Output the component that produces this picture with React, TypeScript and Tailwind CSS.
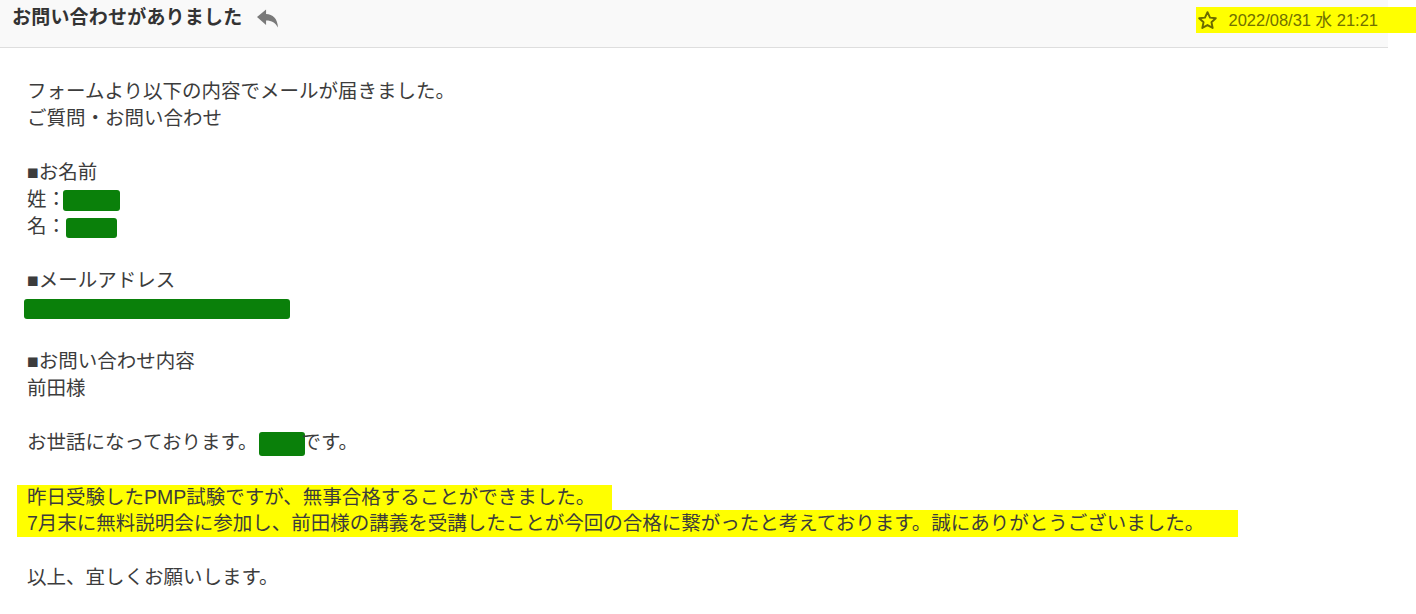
import React from 'react';

const font = { fontFamily: '"Liberation Sans", "Noto Sans CJK JP", sans-serif' };

// green marker blot that hides personal info
const Blot = ({ w, h, className = '' }: { w: string; h: string; className?: string }) => (
  <span className={`inline-block bg-[#0a800a] rounded-[3px] align-middle ${w} ${h} ${className}`} />
);

const Line = ({ children }: { children?: React.ReactNode }) => (
  <div className="h-[27px] leading-[27px] whitespace-nowrap">{children}</div>
);

export default function App() {
  return (
    <div className="w-[1416px] h-[614px] bg-white overflow-hidden" style={font}>
      {/* Header */}
      <div className="w-[1388px] h-[48px] bg-[#f9f9f9] border-b border-[#dedede] flex items-start justify-between pt-[6px]">
        <div className="flex items-center pl-[12px]">
          <span className="text-[19px] leading-[24px] font-bold text-[#333] tracking-[0.2px]">お問い合わせがありました</span>
          <svg viewBox="0 0 24 22" className="ml-[14px] w-[23px] h-[21px]" fill="#7a7a7a">
            <path d="M1 9.5L10.5 1.5V6.3C17.5 6.6 22.6 11 23 20.5C20.5 15.5 16.5 13 10.5 13V17.8Z" />
          </svg>
        </div>
        <div className="flex items-center bg-[#ffff00] h-[26px] mt-[1px] pl-[1px] pr-[38px] -mr-[28px]">
          <svg viewBox="0 0 24 24" className="w-[21px] h-[21px]" fill="none" stroke="#6b6b00" strokeWidth="2.2" strokeLinejoin="round">
            <path d="M12 2.5l2.9 6.2 6.6.7-5 4.5 1.4 6.6L12 17.2l-5.9 3.3 1.4-6.6-5-4.5 6.6-.7z" />
          </svg>
          <span className="ml-[10px] text-[16.5px] text-[#707000]">2022/08/31 水 21:21</span>
        </div>
      </div>

      {/* Body */}
      <div className="pl-[27px] pt-[30px] text-[19.5px] text-[#3c3c3c]">
        <Line>フォームより以下の内容でメールが届きました。</Line>
        <Line>ご質問・お問い合わせ</Line>
        <Line />
        <Line>■お名前</Line>
        <Line>
          姓：<Blot w="w-[57px]" h="h-[21px]" className="-ml-[3px]" />
        </Line>
        <Line>
          名：<Blot w="w-[51px]" h="h-[20px]" />
        </Line>
        <Line />
        <Line>■メールアドレス</Line>
        <Line>
          <Blot w="w-[266px]" h="h-[20px]" className="-ml-[3px]" />
        </Line>
        <Line />
        <Line>■お問い合わせ内容</Line>
        <Line>前田様</Line>
        <Line />
        <Line>
          お世話になっております。<Blot w="w-[46px]" h="h-[24px]" className="ml-[1px] -mr-[3px]" />です。
        </Line>
        <Line />
        <div className="-ml-[10px] pl-[10px] w-[595px] bg-[#ffff00] h-[25px] leading-[25px] mt-[2px] whitespace-nowrap">
          昨日受験したPMP試験ですが、無事合格することができました。
        </div>
        <div className="-ml-[10px] pl-[10px] w-[1221px] bg-[#ffff00] h-[27px] leading-[27px] whitespace-nowrap">
          7月末に無料説明会に参加し、前田様の講義を受講したことが今回の合格に繋がったと考えております。誠にありがとうございました。
        </div>
        <Line />
        <Line>以上、宜しくお願いします。</Line>
      </div>
    </div>
  );
}
